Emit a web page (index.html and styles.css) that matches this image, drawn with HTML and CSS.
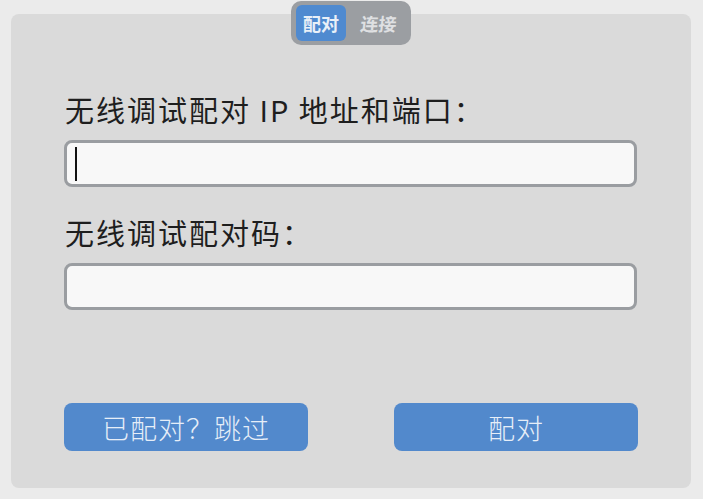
FILE: index.html
```html
<!DOCTYPE html>
<html lang="zh">
<head>
<meta charset="utf-8">
<link rel="stylesheet" href="styles.css">
</head>
<body>
<div class="panel">
  <div class="tabs">
    <span class="tab active">配对</span>
    <span class="tab">连接</span>
  </div>
  <div class="form">
    <label class="label">无线调试配对 IP 地址和端口：</label>
    <div class="input"><span class="caret"></span></div>
    <label class="label second">无线调试配对码：</label>
    <div class="input"></div>
  </div>
  <div class="actions">
    <button class="btn">已配对？跳过</button>
    <button class="btn">配对</button>
  </div>
</div>
</body>
</html>
```
FILE: styles.css
```css
html, body {
  margin: 0;
  padding: 0;
}
body {
  background: #ebebeb;
  font-family: "Noto Sans CJK SC", "Noto Sans", sans-serif;
  width: 703px;
  height: 499px;
  overflow: hidden;
}
.panel {
  position: relative;
  box-sizing: border-box;
  margin: 14px 0 0 11px;
  width: 680px;
  height: 474px;
  background: #dadada;
  border-radius: 8px;
  padding: 75px 53px 0 53px;
  display: flex;
  flex-direction: column;
}
.tabs {
  position: absolute;
  top: -13px;
  left: 280px;
  width: 120px;
  height: 44px;
  box-sizing: border-box;
  background: #9b9ea2;
  border-radius: 10px;
  display: flex;
  align-items: center;
  padding: 0 3px 0 5px;
  gap: 3px;
}
.tab {
  flex: 1;
  height: 36px;
  line-height: 36px;
  text-align: center;
  font-size: 18px;
  font-weight: bold;
  color: #dfe0e2;
  border-radius: 6px;
  transform: skewX(-6deg);
}
.tab.active {
  flex: 0 0 50px;
  background: #4f8ad0;
  color: #e9f0f8;
  transform: none;
}
.tab.active::selection {
  background: transparent;
}
.form {
  display: flex;
  flex-direction: column;
}
.label {
  font-size: 29px;
  letter-spacing: 2px;
  line-height: 40px;
  color: #1e1e1e;
  padding-left: 1px;
}
.label.second {
  margin-top: 25px;
}
.input {
  margin-top: 11px;
  box-sizing: border-box;
  height: 47px;
  width: 573px;
  border: 3px solid #9a9da1;
  border-radius: 8px;
  background: #f8f8f8;
  display: flex;
  align-items: center;
  padding-left: 8px;
}
.caret {
  width: 2px;
  height: 34px;
  background: #111;
}
.actions {
  margin-top: auto;
  margin-bottom: 37px;
  display: flex;
  justify-content: space-between;
  width: 574px;
}
.btn {
  width: 244px;
  height: 48px;
  border: none;
  border-radius: 8px;
  background: #5289cc;
  color: #e6eef8;
  font-family: "Noto Sans CJK SC", "Noto Sans", sans-serif;
  font-size: 27px;
  font-weight: 300;
  letter-spacing: 1px;
  padding: 0;
}
```
